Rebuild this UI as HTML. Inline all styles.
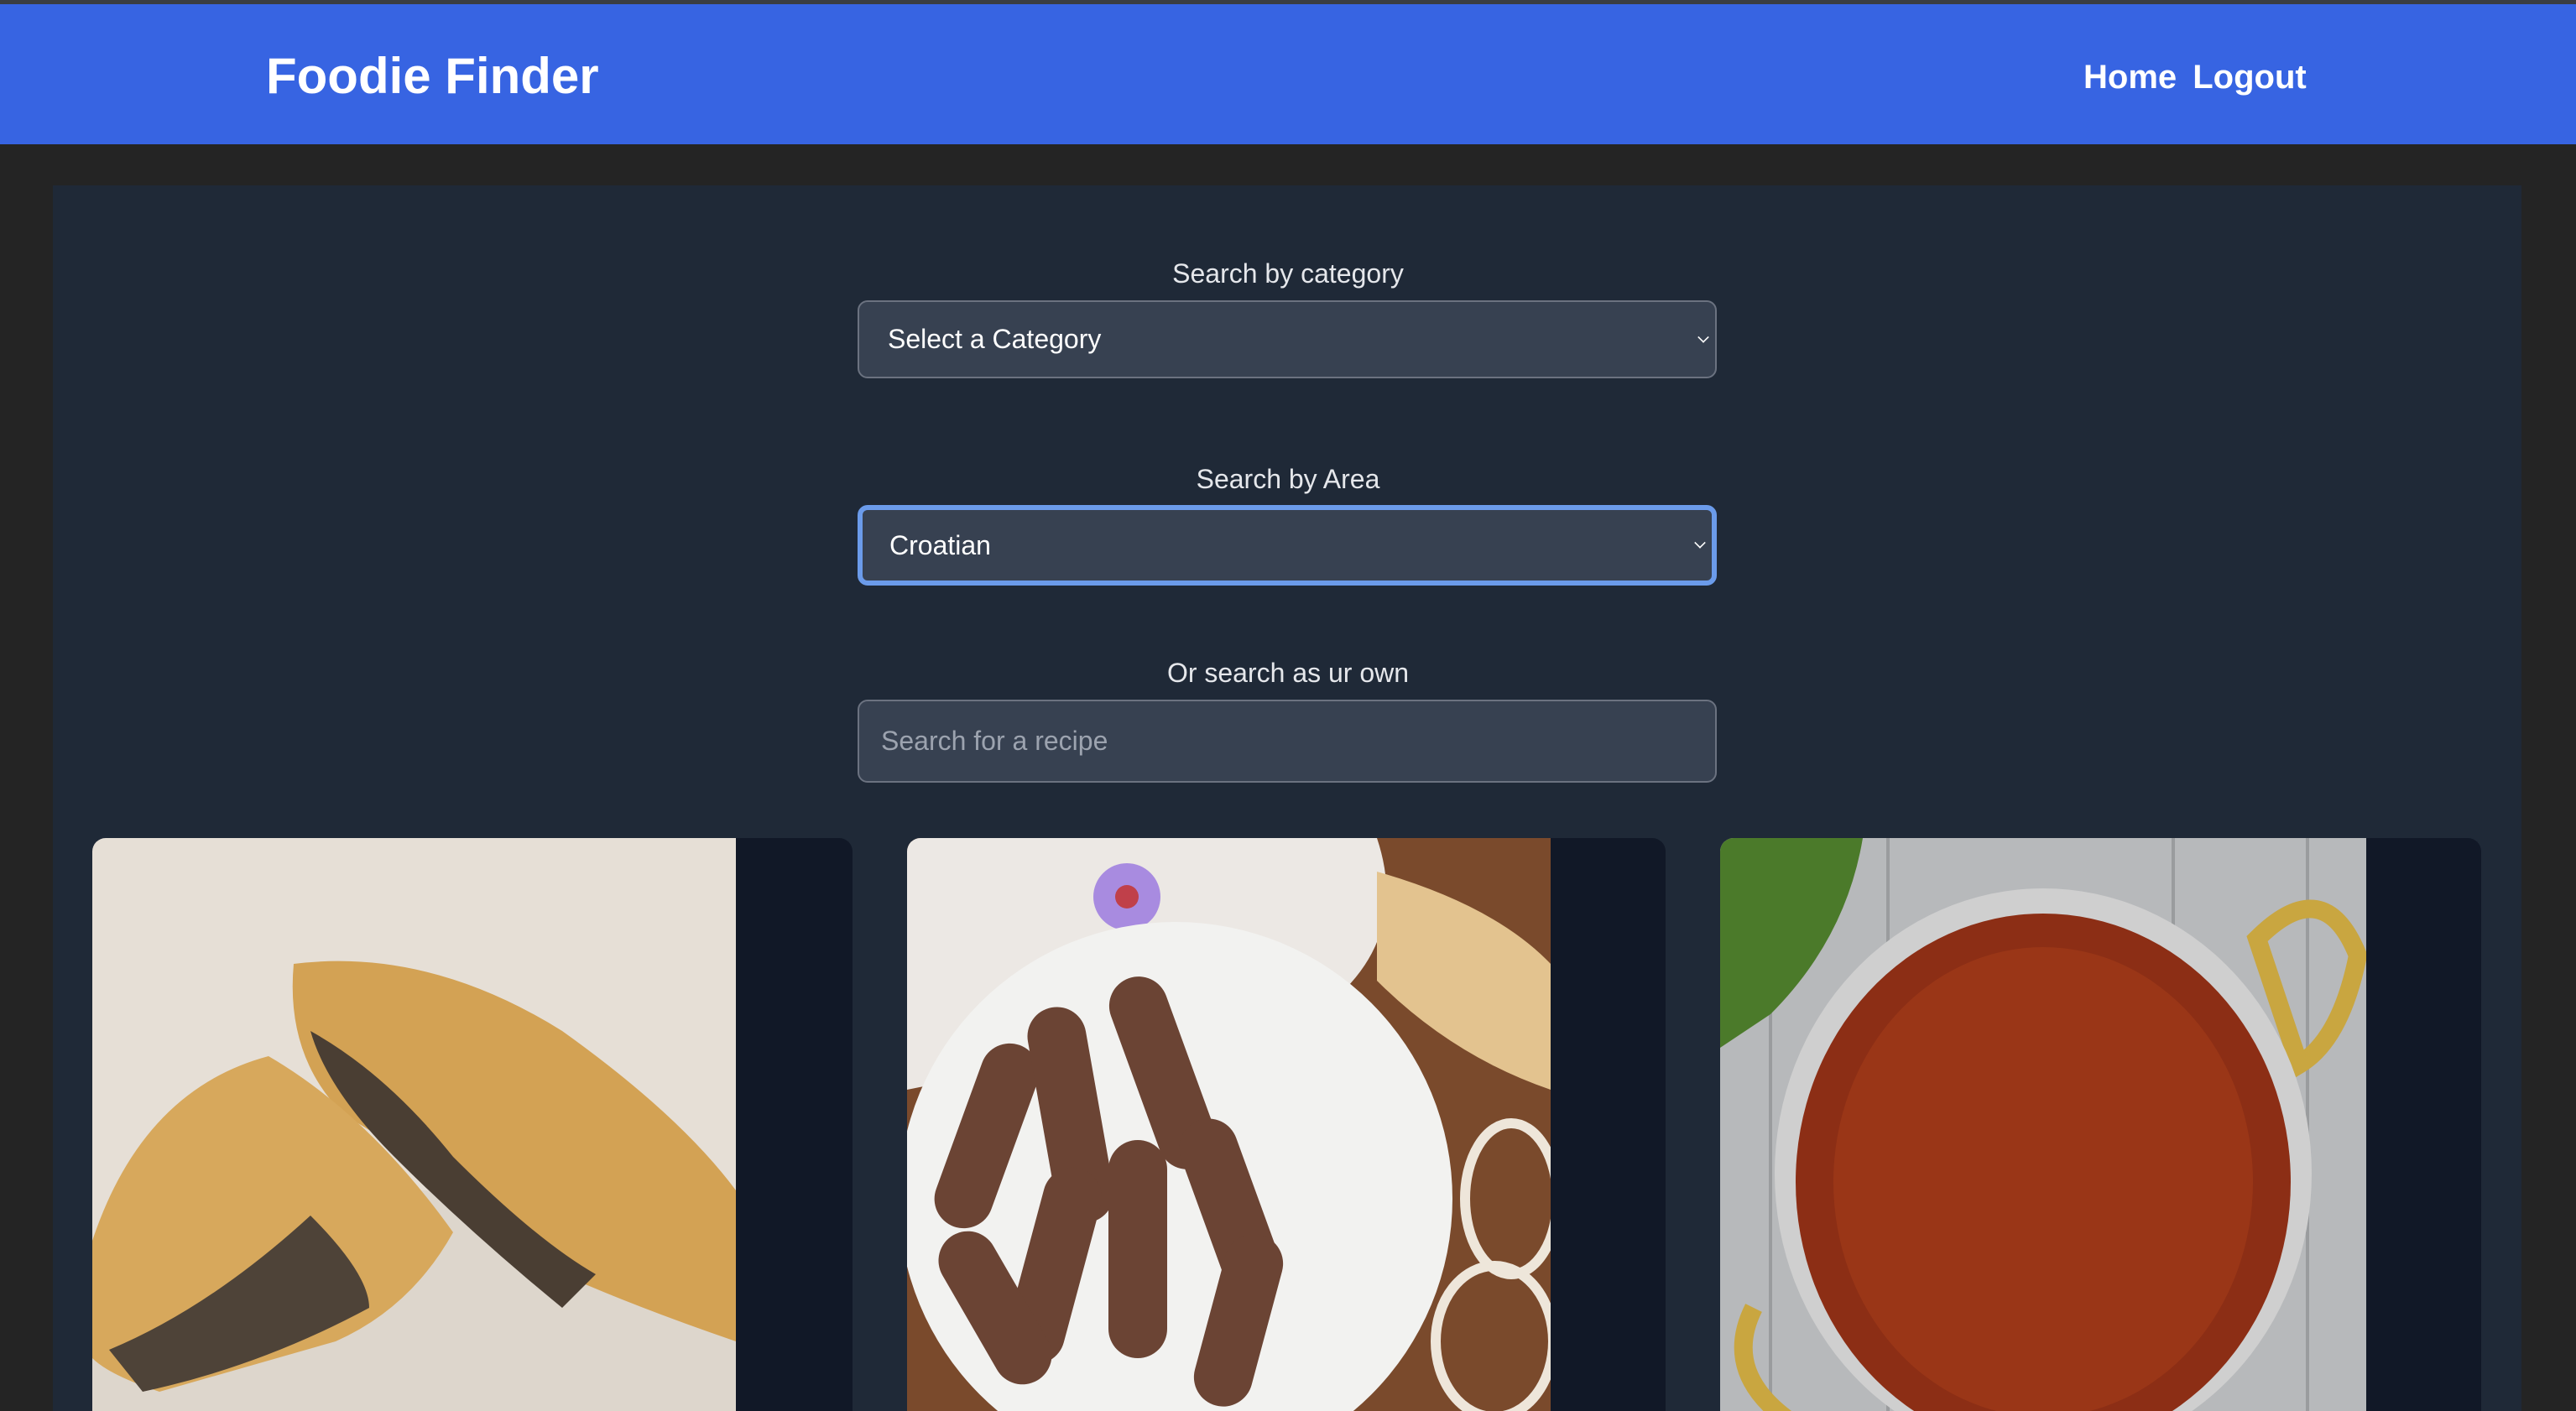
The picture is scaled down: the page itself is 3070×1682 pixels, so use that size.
<!DOCTYPE html>
<html><head><meta charset="utf-8"><style>
*{margin:0;padding:0;box-sizing:border-box}
html,body{width:3070px;height:1682px;overflow:hidden}
body{background:#242424;font-family:"Liberation Sans",sans-serif;position:relative}
.top{position:absolute;left:0;top:0;width:3070px;height:5px;background:#3a3d42}
.hdr{position:absolute;left:0;top:5px;width:3070px;height:167px;background:#3764e2}
.title{position:absolute;left:317px;top:51px;font-size:60px;font-weight:bold;color:#fff}
.nav{position:absolute;left:2483px;top:65px;font-size:40px;font-weight:bold;color:#fff;word-spacing:8px}
.panel{position:absolute;left:63px;top:221px;width:2942px;height:1461px;background:#1f2937}
.lbl{position:absolute;left:0;width:3070px;text-align:center;font-size:32px;color:#e5e7eb}
.box{position:absolute;left:1022px;width:1024px;background:#374151;border:2px solid #6b7280;border-radius:12px;font-size:32px;color:#fff;padding-left:34px;display:flex;align-items:center}
.chev{position:absolute;right:8px;top:50%;width:12px;height:12px;margin-top:-9px;border-right:2px solid #fff;border-bottom:2px solid #fff;transform:rotate(45deg) scale(.8)}
.card{position:absolute;top:999px;height:683px;background:#111827;border-radius:16px 16px 0 0;overflow:hidden}
.card svg{position:absolute;left:0;top:0}
</style></head><body>
<div class="top"></div>
<div class="hdr"><div class="title">Foodie Finder</div><div class="nav">Home Logout</div></div>
<div class="panel"></div>
<div class="lbl" style="top:308px">Search by category</div>
<div class="box" style="top:358px;height:93px">Select a Category<span class="chev"></span></div>
<div class="lbl" style="top:553px">Search by Area</div>
<div class="box" style="top:602px;height:96px;border:6px solid #6b9bea;padding-left:32px">Croatian<span class="chev"></span></div>
<div class="lbl" style="top:784px">Or search as ur own</div>
<div class="box" style="top:834px;height:99px;color:#9ca3af;padding-left:26px">Search for a recipe</div>

<div class="card" style="left:110px;width:906px">
<svg width="767" height="683" viewBox="0 0 767 683">
<rect width="767" height="683" fill="#e6dfd6"/>
<ellipse cx="380" cy="620" rx="480" ry="200" fill="#ddd6cc"/>
<path d="M240 150 Q400 130 560 230 Q700 330 767 420 L767 600 Q650 560 560 520 Q420 400 300 330 Q230 260 240 150Z" fill="#d3a254"/>
<path d="M260 230 Q350 280 430 380 Q530 480 600 520 L560 560 Q450 470 360 380 Q280 300 260 230Z" fill="#4a3e33"/>
<path d="M0 480 Q60 300 210 260 Q330 330 430 470 Q380 560 290 600 L80 660 Q20 640 0 620Z" fill="#d7a85c"/>
<path d="M20 610 Q140 560 260 450 Q330 520 330 560 Q200 630 60 660Z" fill="#4e4338"/>
</svg></div>

<div class="card" style="left:1081px;width:904px">
<svg width="767" height="683" viewBox="0 0 767 683">
<rect width="767" height="683" fill="#7a4a2c"/>
<path d="M0 0 L560 0 Q600 120 500 200 L0 300Z" fill="#ece8e4"/>
<circle cx="262" cy="70" r="40" fill="#a88be0"/><circle cx="262" cy="70" r="14" fill="#c0404a"/>
<path d="M560 40 Q700 80 767 150 L767 300 Q650 260 560 170Z" fill="#e3c38f"/>
<ellipse cx="320" cy="430" rx="330" ry="330" fill="#f2f2f0"/>
<g fill="#6b4434">
<rect x="60" y="240" width="70" height="230" rx="35" transform="rotate(20 95 355)"/>
<rect x="160" y="200" width="70" height="260" rx="35" transform="rotate(-10 195 330)"/>
<rect x="270" y="160" width="70" height="240" rx="35" transform="rotate(-20 305 280)"/>
<rect x="140" y="390" width="70" height="240" rx="35" transform="rotate(15 175 510)"/>
<rect x="240" y="360" width="70" height="260" rx="35"/>
<rect x="350" y="330" width="70" height="220" rx="35" transform="rotate(-20 385 440)"/>
<rect x="70" y="460" width="70" height="200" rx="35" transform="rotate(-30 105 560)"/>
<rect x="360" y="470" width="70" height="210" rx="35" transform="rotate(15 395 575)"/>
</g>
<ellipse cx="720" cy="430" rx="55" ry="90" fill="none" stroke="#eee6da" stroke-width="12"/>
<ellipse cx="700" cy="600" rx="70" ry="90" fill="none" stroke="#eee6da" stroke-width="12"/>
</svg></div>

<div class="card" style="left:2050px;width:907px">
<svg width="770" height="683" viewBox="0 0 770 683">
<rect width="770" height="683" fill="#b7b9bb"/>
<g stroke="#9a9c9e" stroke-width="4"><line x1="60" y1="0" x2="60" y2="683"/><line x1="200" y1="0" x2="200" y2="683"/><line x1="540" y1="0" x2="540" y2="683"/><line x1="700" y1="0" x2="700" y2="683"/></g>
<path d="M0 0 L170 0 Q150 120 60 210 L0 250Z" fill="#4b7a2a"/>
<path d="M640 120 Q720 40 760 140 Q740 240 690 270Z" fill="none" stroke="#c9a640" stroke-width="22"/>
<path d="M40 560 Q0 640 90 700" fill="none" stroke="#c9a640" stroke-width="22"/>
<ellipse cx="385" cy="400" rx="320" ry="340" fill="#cfcfcf"/>
<ellipse cx="385" cy="410" rx="295" ry="320" fill="#8c2e15"/>
<ellipse cx="385" cy="410" rx="250" ry="280" fill="#a03a18" opacity=".7"/>
</svg></div>
</body></html>
